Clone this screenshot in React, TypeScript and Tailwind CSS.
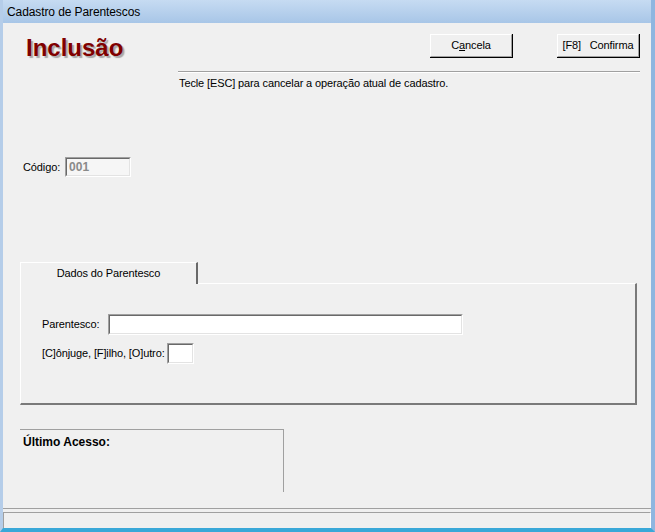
import React from "react";

const ui = { fontFamily: '"Liberation Sans", Arial, sans-serif' };

function Button({ children, className = "" }: { children: React.ReactNode; className?: string }) {
  return (
    <div
      className={`w-[83px] h-[24px] border-r border-b border-[#000] ${className}`}
    >
      <div className="h-full border-l border-t border-white border-r border-b border-r-[#a0a0a0] border-b-[#a0a0a0] flex items-center justify-center text-[11px] text-black bg-[#f0f0f0]">
        {children}
      </div>
    </div>
  );
}

function Sunken({ className = "", children, inner = "bg-white" }: { className?: string; children?: React.ReactNode; inner?: string }) {
  return (
    <div className={`border-t border-l border-[#a0a0a0] border-r border-b border-r-white border-b-white ${className}`}>
      <div className={`h-full border-t border-l border-[#696969] border-r border-b border-r-[#e3e3e3] border-b-[#e3e3e3] ${inner}`}>
        {children}
      </div>
    </div>
  );
}

export default function App() {
  return (
    <div
      className="w-[655px] h-[532px] flex flex-col bg-[#a9c6e8] border-l-[3px] border-r-[4px] border-b-[4px] border-l-[#b5cde9] border-r-[#8fb6e0] border-b-[#3aa8d8] overflow-hidden"
      style={ui}
    >
      {/* title bar */}
      <div className="h-[23px] shrink-0 flex items-center text-[12px] tracking-[-0.1px] text-black bg-gradient-to-b from-[#c6dbf2] to-[#a8c6e7] -ml-[3px] -mr-[4px] pl-[7px] pt-[1px]">
        Cadastro de Parentescos
      </div>

      <div className="flex-1 bg-[#f0f0f0] flex flex-col text-[11px] tracking-[-0.12px] text-black">
        {/* header */}
        <div className="flex items-start mt-[11px] pr-[11px]">
          <div
            className="pl-[23px] pt-[1px] text-[24px] tracking-normal font-bold text-[#800000] leading-[26px]"
            style={{ textShadow: "2px 2px 1px #a8a8a8", fontFamily: "Arial, 'Liberation Sans', sans-serif" }}
          >
            Inclusão
          </div>
          <div className="flex-1" />
          <Button>
            C<span className="underline">a</span>ncela
          </Button>
          <Button className="ml-[44px]">
            <span>[F8]&nbsp;&nbsp;&nbsp;Confirma</span>
          </Button>
        </div>

        <div className="ml-[175px] mr-[11px] mt-[10px] border-t border-[#a0a0a0] border-b border-b-white" />
        <div className="ml-[176px] mt-[4px] leading-[13px]">
          Tecle [ESC] para cancelar a operação atual de cadastro.
        </div>

        {/* código */}
        <div className="flex items-center mt-[67px] ml-[20px]">
          <span>Código:</span>
          <Sunken className="ml-[5px] w-[66px] h-[20px]" inner="bg-[#f6f6f6]">
            <div className="pl-[2px] leading-[16px] text-[12px] font-bold text-[#8a8a8a] tracking-normal">001</div>
          </Sunken>
        </div>

        {/* tab control */}
        <div className="mt-[84px] ml-[17px] mr-[14px] flex flex-col">
          <div className="flex">
            <div className="w-[178px] h-[22px] border-l border-t border-white border-r-[2px] border-r-[#696969] bg-[#f0f0f0] flex items-center justify-center pb-[1px] relative top-[1px] z-10">
              Dados do Parentesco
            </div>
          </div>
          <div className="h-[122px] border-l border-t border-white border-r-[2px] border-b-[2px] border-r-[#7a7a7a] border-b-[#7a7a7a] flex flex-col">
            <div className="flex items-center mt-[30px] ml-[21px]">
              <span>Parentesco:</span>
              <Sunken className="ml-[9px] w-[355px] h-[21px]" />
            </div>
            <div className="flex items-center mt-[8px] ml-[21px]">
              <span>[C]ônjuge, [F]ilho, [O]utro:</span>
              <Sunken className="ml-[2px] w-[27px] h-[21px]" />
            </div>
          </div>
        </div>

        {/* último acesso */}
        <div className="ml-[17px] mt-[24px] w-[264px] h-[63px] border-t border-r border-[#a0a0a0]">
          <div className="pl-[3px] pt-[3px] text-[12px] font-bold tracking-normal">Último Acesso:</div>
        </div>

        <div className="flex-1" />
        {/* status bar */}
        <div className="border-t border-[#a0a0a0] mb-[3px]" />
        <div className="h-[16px] border-t border-l border-[#a0a0a0] border-r border-r-white" />
      </div>
    </div>
  );
}
